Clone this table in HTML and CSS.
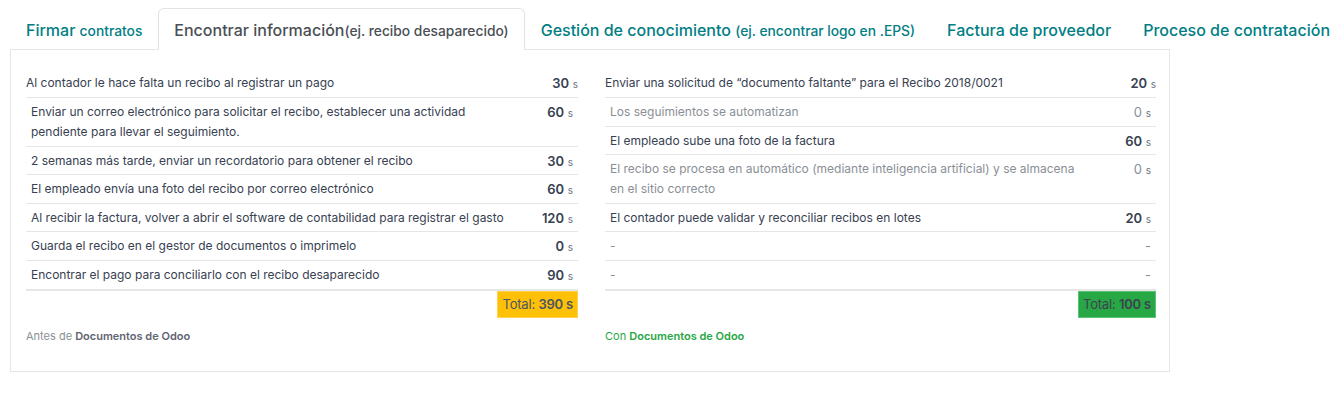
FILE: index.html
```html
<!DOCTYPE html>
<html lang="es">
<head>
<meta charset="utf-8">
<title>Documentos</title>
<link rel="stylesheet" href="styles.css">
</head>
<body>
<div class="wrap">
  <ul class="tabs">
    <li class="tab"><b>Firmar</b> <small>contratos</small></li>
    <li class="tab active">Encontrar información<small>(ej. recibo desaparecido)</small></li>
    <li class="tab">Gestión de conocimiento <small>(ej. encontrar logo en .EPS)</small></li>
    <li class="tab">Factura de proveedor</li>
    <li class="tab">Proceso de contratación</li>
  </ul>
  <div class="panel">
    <div class="cols">
      <div class="col">
        <table class="steps before">
          <tr class="first"><td class="txt">Al contador le hace falta un recibo al registrar un pago</td><td class="num"><b>30</b> <span class="u">s</span></td></tr>
          <tr><td class="txt">Enviar un correo electrónico para solicitar el recibo, establecer una actividad pendiente para llevar el seguimiento.</td><td class="num"><b>60</b> <span class="u">s</span></td></tr>
          <tr><td class="txt">2 semanas más tarde, enviar un recordatorio para obtener el recibo</td><td class="num"><b>30</b> <span class="u">s</span></td></tr>
          <tr><td class="txt">El empleado envía una foto del recibo por correo electrónico</td><td class="num"><b>60</b> <span class="u">s</span></td></tr>
          <tr><td class="txt">Al recibir la factura, volver a abrir el software de contabilidad para registrar el gasto</td><td class="num"><b>120</b> <span class="u">s</span></td></tr>
          <tr><td class="txt">Guarda el recibo en el gestor de documentos o imprimelo</td><td class="num"><b>0</b> <span class="u">s</span></td></tr>
          <tr class="last"><td class="txt">Encontrar el pago para conciliarlo con el recibo desaparecido</td><td class="num"><b>90</b> <span class="u">s</span></td></tr>
        </table>
        <div class="total-row"><span class="total warn">Total: <b>390 s</b></span></div>
        <p class="note">Antes de <b>Documentos de Odoo</b></p>
      </div>
      <div class="col">
        <table class="steps after">
          <tr class="first"><td class="txt">Enviar una solicitud de “documento faltante” para el Recibo 2018/0021</td><td class="num"><b>20</b> <span class="u">s</span></td></tr>
          <tr class="muted"><td class="txt">Los seguimientos se automatizan</td><td class="num">0 <span class="u">s</span></td></tr>
          <tr><td class="txt">El empleado sube una foto de la factura</td><td class="num"><b>60</b> <span class="u">s</span></td></tr>
          <tr class="muted"><td class="txt">El recibo se procesa en automático (mediante inteligencia artificial) y se almacena en el sitio correcto</td><td class="num">0 <span class="u">s</span></td></tr>
          <tr><td class="txt">El contador puede validar y reconciliar recibos en lotes</td><td class="num"><b>20</b> <span class="u">s</span></td></tr>
          <tr class="muted"><td class="txt">-</td><td class="num">-</td></tr>
          <tr class="muted last"><td class="txt">-</td><td class="num">-</td></tr>
        </table>
        <div class="total-row"><span class="total ok">Total: <b>100 s</b></span></div>
        <p class="note green">Con <b>Documentos de Odoo</b></p>
      </div>
    </div>
  </div>
</div>
</body>
</html>
```
FILE: styles.css
```css
* { box-sizing: border-box; }
html, body { margin: 0; background: #fff; }
body {
  font-family: Inter, Roboto, "Liberation Sans", sans-serif;
  color: #374151;
  width: 1342px;
}
.wrap { padding: 8px 10px 0; }
.tabs {
  list-style: none;
  margin: 0;
  padding: 0;
  display: flex;
  white-space: nowrap;
  position: relative;
  z-index: 1;
}
.tab {
  padding: 9px 15px 7px 15px;
  font-size: 16px;
  line-height: 24px;
  font-weight: 500;
  color: #017e84;
  border: 1px solid transparent;
  border-bottom: 0;
  border-radius: 6px 6px 0 0;
  height: 42px;
}
.tab b { font-weight: 500; }
.tab small { font-size: 13.8px; font-weight: 500; }
.tab.active {
  color: #4a4f55;
  background: #fff;
  border-color: #e2e2e2;
}
.panel {
  width: 1160px;
  margin-top: -1px;
  border: 1px solid #e6e6e6;
  padding: 19px 15px 27px;
}
.cols {
  display: grid;
  grid-template-columns: 552px 551px;
  column-gap: 27px;
}
.steps {
  width: 100%;
  border-collapse: collapse;
  table-layout: fixed;
  font-size: 12px;
  line-height: 20px;
}
.steps td {
  padding: 4px 5px 3.6px;
  border-bottom: 1px solid #e6e6e6;
  vertical-align: top;
  height: 28.6px;
}
.steps tr.first td { padding-left: 0; padding-right: 0; }
.steps tr.last td { border-bottom: 2px solid #e6e6e6; }
.steps.before .txt { width: 490px; }
.steps.after .txt { width: 476px; }
.steps .num { text-align: right; white-space: nowrap; font-size: 13px; }
.steps .num b { font-weight: 600; line-height: 1; }
.steps .u { font-size: 10px; color: #6b7280; line-height: 1; }
.steps tr.muted td { color: #8a8f96; }
.total-row { display: flex; justify-content: flex-end; }
.total {
  display: inline-block;
  font-size: 13px;
  line-height: 25px;
  padding: 0 4px;
  color: #4b5563;
  border: 1px solid transparent;
  letter-spacing: -0.2px;
}
.total b { font-weight: 600; }
.total.warn { background: #ffc107; border-color: #ffd24d; }
.total.ok { background: #28a745; border-color: #5cc276; color: #3b4450; }
.note {
  margin: 10px 0 0;
  font-size: 11px;
  line-height: 16px;
  color: #8a8f96;
}
.note b { color: #5f6670; font-weight: 600; }
.note.green, .note.green b { color: #28a745; }
```
